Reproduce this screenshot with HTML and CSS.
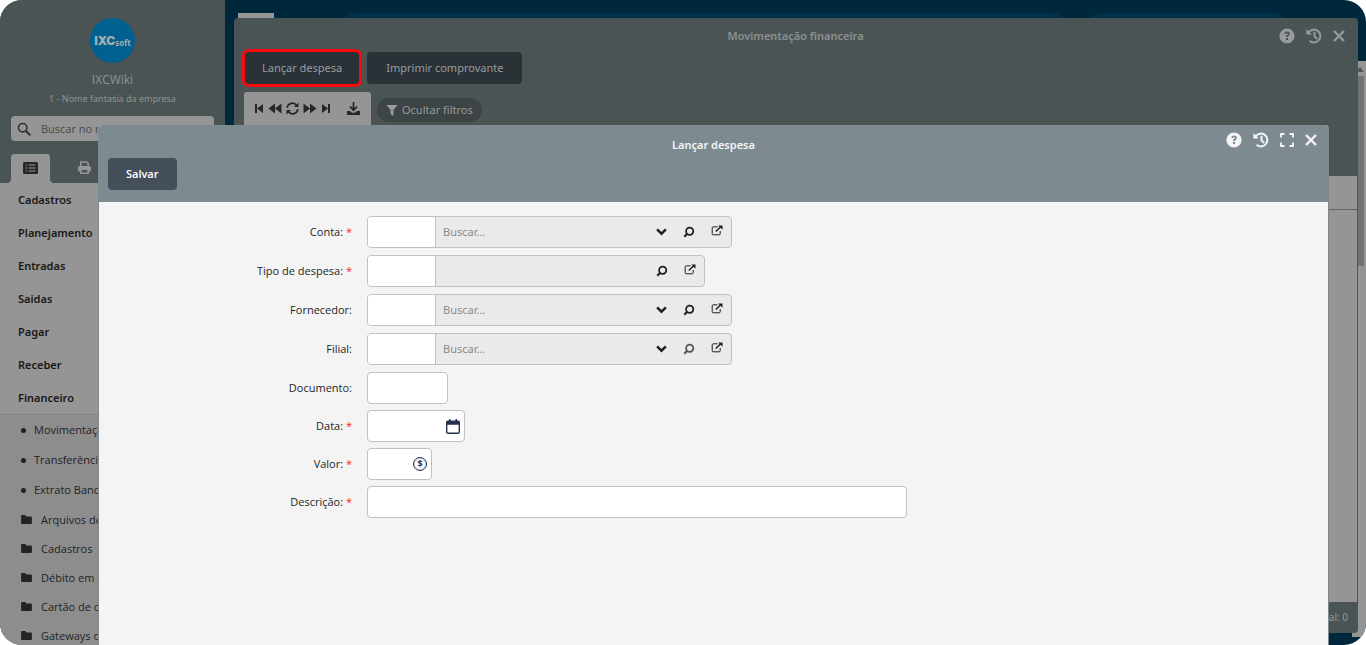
FILE: index.html
```html
<!DOCTYPE html>
<html lang="pt-BR">
<head>
<meta charset="utf-8">
<title>Lançar despesa</title>
<link rel="stylesheet" href="styles.css">
</head>
<body>
<svg class="sprite" aria-hidden="true">
  <symbol id="i-search" viewBox="0 0 16 16"><circle cx="6.5" cy="6.5" r="4.8" fill="none" stroke="currentColor" stroke-width="1.8"/><path d="M10 10l4.6 4.6" stroke="currentColor" stroke-width="2.2" stroke-linecap="round"/></symbol>
  <symbol id="i-folder" viewBox="0 0 12 10"><path d="M1 0h3.4l1.6 1.6H11a1 1 0 0 1 1 1V9a1 1 0 0 1-1 1H1a1 1 0 0 1-1-1V1a1 1 0 0 1 1-1z" fill="currentColor"/></symbol>
  <symbol id="i-help" viewBox="0 0 16 16"><path fill-rule="evenodd" fill="currentColor" d="M8 0.4a7.6 7.6 0 1 0 0 15.2A7.6 7.6 0 0 0 8 .4zM5.4 5.9C5.6 4.4 6.6 3.6 8.1 3.6c1.6 0 2.7.9 2.7 2.2 0 1-.5 1.6-1.2 2.1-.6.4-.7.6-.7 1.1H7.1c0-1.2.3-1.7 1-2.2.6-.4.8-.6.8-1 0-.4-.3-.7-.8-.7s-.8.3-.9.9zM7 10h2v2H7z"/></symbol>
  <symbol id="i-history" viewBox="0 0 16 16"><path d="M2.8 4.2A6.4 6.4 0 1 1 4.2 13.2M8.500 4.600v3.800l2.200 2" fill="none" stroke="currentColor" stroke-width="2" stroke-linecap="round"/><path d="M.3 1v5.500h5.500z" fill="currentColor"/></symbol>
  <symbol id="i-expand" viewBox="0 0 14 14"><path d="M1 4.500V1h3.500M9.500 1H13v3.500M13 9.500V13H9.500M4.500 13H1V9.500" fill="none" stroke="currentColor" stroke-width="1.900"/></symbol>
  <symbol id="i-close" viewBox="0 0 12 12"><path d="M1 1l10 10M11 1L1 11" stroke="currentColor" stroke-width="2.400"/></symbol>
  <symbol id="i-down" viewBox="0 0 10 8"><path d="M1 2l4 4 4-4" fill="none" stroke="currentColor" stroke-width="2.200"/></symbol>
  <symbol id="i-lookup" viewBox="0 0 12 12"><circle cx="6.700" cy="5.300" r="3.600" fill="none" stroke="currentColor" stroke-width="1.800"/><path d="M4.200 7.800L1.300 10.700" stroke="currentColor" stroke-width="2.200"/></symbol>
  <symbol id="i-open" viewBox="0 0 12 12"><path d="M6.500 1.800H2.200a1 1 0 0 0-1 1v6a1 1 0 0 0 1 1h6a1 1 0 0 0 1-1V6" fill="none" stroke="currentColor" stroke-width="1"/><path d="M4.800 6.500L10 1.500" stroke="currentColor" stroke-width="1.500"/><path d="M7.200.5H11.500v4.300z" fill="currentColor"/></symbol>
</svg>

<div class="app">
  <aside class="sidebar">
    <div class="profile">
      <div class="logo"><span class="logo-main">IXC</span><span class="logo-sub">soft</span></div>
      <div class="profile-name">IXCWiki</div>
      <div class="profile-company">1 - Nome fantasia da empresa</div>
      <label class="menu-search">
        <svg class="ic-14"><use href="#i-search"/></svg>
        <input type="text" placeholder="Buscar no menu" aria-label="Buscar no menu">
      </label>
      <div class="tabs">
        <button class="tab tab-active" aria-label="Menu">
          <svg width="15" height="12" viewBox="0 0 15 12"><rect width="15" height="12" rx="1.500" fill="#262626"/><path d="M2.500 3h1.500M2.500 6h1.500M2.500 9h1.500M5.500 3h7M5.500 6h7M5.500 9h7" stroke="#959595" stroke-width="1.200"/></svg>
        </button>
        <button class="tab" aria-label="Imprimir">
          <svg width="13" height="13" viewBox="0 0 13 13"><path d="M2.800 5V1h5.900l1.500 1.500V5" fill="none" stroke="currentColor" stroke-width="1.600"/><path fill-rule="evenodd" fill="currentColor" d="M1.800 5h9.400A1.800 1.800 0 0 1 13 6.800V10.500h-2V13H2v-2.500H0V6.800A1.800 1.800 0 0 1 1.800 5zM3.600 9v2.500h5.800V9z"/></svg>
        </button>
      </div>
    </div>
    <nav>
      <ul class="menu">
        <li><a href="#">Cadastros</a></li>
        <li><a href="#">Planejamento</a></li>
        <li><a href="#">Entradas</a></li>
        <li><a href="#">Saidas</a></li>
        <li><a href="#">Pagar</a></li>
        <li><a href="#">Receber</a></li>
        <li><a href="#">Financeiro</a></li>
      </ul>
      <ul class="submenu">
        <li><a class="leaf" href="#">Movimentação financeira</a></li>
        <li><a class="leaf" href="#">Transferências</a></li>
        <li><a class="leaf" href="#">Extrato Bancário</a></li>
        <li><a class="folder" href="#"><svg class="ic-folder"><use href="#i-folder"/></svg>Arquivos de</a></li>
        <li><a class="folder" href="#"><svg class="ic-folder"><use href="#i-folder"/></svg>Cadastros</a></li>
        <li><a class="folder" href="#"><svg class="ic-folder"><use href="#i-folder"/></svg>Débito em conta</a></li>
        <li><a class="folder" href="#"><svg class="ic-folder"><use href="#i-folder"/></svg>Cartão de crédito</a></li>
        <li><a class="folder" href="#"><svg class="ic-folder"><use href="#i-folder"/></svg>Gateways de</a></li>
      </ul>
    </nav>
  </aside>

  <main class="workspace">
    <div class="topbar"><div class="topbar-tab"></div><div class="topbar-pill"></div><div class="topbar-pill topbar-pill-end"></div></div>
    <div class="scroller">
      <svg width="8" height="5" viewBox="0 0 8 5"><path d="M0 5l4-5 4 5z" fill="#555"/></svg>
      <div class="scroller-thumb"></div>
    </div>
    <section class="window">
      <header class="window-head">
        <h2 class="title">Movimentação financeira</h2>
        <div class="window-tools">
          <button aria-label="Ajuda"><svg class="ic-16"><use href="#i-help"/></svg></button>
          <button aria-label="Histórico"><svg class="ic-16"><use href="#i-history"/></svg></button>
          <button aria-label="Fechar"><svg class="ic-12"><use href="#i-close"/></svg></button>
        </div>
        <div class="actions">
          <button class="btn btn-marked">Lançar despesa</button>
          <button class="btn">Imprimir comprovante</button>
        </div>
        <div class="filters">
          <div class="pager">
            <button aria-label="Primeira"><svg width="10" height="11" viewBox="0 0 10 11" fill="currentColor"><path d="M1 1h2v9H1zM9 1v9L3 5.500z"/></svg></button>
            <button aria-label="Anterior"><svg width="14" height="11" viewBox="0 0 14 11" fill="currentColor"><path d="M7 .5v10L.5 5.500zM13.500.5v10L7 5.500z"/></svg></button>
            <button aria-label="Atualizar"><svg width="13" height="13" viewBox="0 0 13 13"><path d="M1.200 5.800a5.200 5.200 0 0 1 9.500-2.300M11.800 7.200a5.200 5.200 0 0 1-9.500 2.300" fill="none" stroke="currentColor" stroke-width="1.700"/><path d="M12.500.5V5H8zM.5 12.500V8H5z" fill="currentColor"/></svg></button>
            <button aria-label="Próxima"><svg width="14" height="11" viewBox="0 0 14 11" fill="currentColor"><path d="M.5.5v10L7 5.500zM7 .5v10l6.500-5z"/></svg></button>
            <button aria-label="Última"><svg width="10" height="11" viewBox="0 0 10 11" fill="currentColor"><path d="M7 1h2v9H7zM1 1v9l6-4.500z"/></svg></button>
            <button class="download" aria-label="Baixar"><svg width="13" height="13" viewBox="0 0 13 13"><path d="M6.500 0v7M3 4.500l3.500 3.700L10 4.500" fill="none" stroke="currentColor" stroke-width="1.700"/><path d="M0 9h3l2 1.700h3L10 9h3v4H0z" fill="currentColor"/></svg></button>
          </div>
          <button class="filter-toggle"><svg width="12" height="11" viewBox="0 0 12 11"><path d="M.5 0h11L7.500 5v6l-3-2V5z" fill="currentColor"/></svg>Ocultar filtros</button>
        </div>
      </header>
      <div class="grid-head"></div>
      <div class="grid-body"></div>
      <footer class="window-foot">Total: 0</footer>
    </section>
  </main>

  <section class="dialog" role="dialog" aria-labelledby="dialog-title">
    <header class="dialog-head">
      <h1 class="title" id="dialog-title">Lançar despesa</h1>
      <div class="dialog-tools">
        <button aria-label="Ajuda"><svg class="ic-16"><use href="#i-help"/></svg></button>
        <button aria-label="Histórico"><svg class="ic-16"><use href="#i-history"/></svg></button>
        <button aria-label="Maximizar"><svg class="ic-14"><use href="#i-expand"/></svg></button>
        <button aria-label="Fechar"><svg class="ic-12"><use href="#i-close"/></svg></button>
      </div>
      <button class="btn btn-save">Salvar</button>
    </header>
    <form class="form">
      <div class="row row-lookup">
        <label for="conta">Conta: <span class="req">*</span></label>
        <div class="lookup">
          <input id="conta" type="text">
          <span class="pick"><select aria-label="Buscar conta"><option>Buscar...</option></select><svg class="ic-down"><use href="#i-down"/></svg></span>
          <button type="button" aria-label="Pesquisar"><svg class="ic-12"><use href="#i-lookup"/></svg></button>
          <button type="button" aria-label="Abrir"><svg class="ic-open"><use href="#i-open"/></svg></button>
        </div>
      </div>
      <div class="row row-lookup">
        <label for="tipo">Tipo de despesa: <span class="req">*</span></label>
        <div class="lookup lookup-short">
          <input id="tipo" type="text">
          <span class="pick"></span>
          <button type="button" aria-label="Pesquisar"><svg class="ic-12"><use href="#i-lookup"/></svg></button>
          <button type="button" aria-label="Abrir"><svg class="ic-open"><use href="#i-open"/></svg></button>
        </div>
      </div>
      <div class="row row-lookup">
        <label for="fornecedor">Fornecedor:</label>
        <div class="lookup">
          <input id="fornecedor" type="text">
          <span class="pick"><select aria-label="Buscar fornecedor"><option>Buscar...</option></select><svg class="ic-down"><use href="#i-down"/></svg></span>
          <button type="button" aria-label="Pesquisar"><svg class="ic-12"><use href="#i-lookup"/></svg></button>
          <button type="button" aria-label="Abrir"><svg class="ic-open"><use href="#i-open"/></svg></button>
        </div>
      </div>
      <div class="row row-lookup">
        <label for="filial">Filial:</label>
        <div class="lookup">
          <input id="filial" type="text">
          <span class="pick"><select aria-label="Buscar filial"><option>Buscar...</option></select><svg class="ic-down"><use href="#i-down"/></svg></span>
          <button type="button" class="muted" aria-label="Pesquisar"><svg class="ic-12"><use href="#i-lookup"/></svg></button>
          <button type="button" aria-label="Abrir"><svg class="ic-open"><use href="#i-open"/></svg></button>
        </div>
      </div>
      <div class="row">
        <label for="documento">Documento:</label>
        <div class="field field-doc"><input id="documento" type="text"></div>
      </div>
      <div class="row">
        <label for="data">Data: <span class="req">*</span></label>
        <div class="field field-date"><input id="data" type="text">
          <svg width="14" height="15" viewBox="0 0 14 15"><path d="M3 0h1.500v2H3zM9.500 0H11v2H9.500z" fill="#23304f"/><rect x=".7" y="2.200" width="12.600" height="12" rx="1.200" fill="#fff" stroke="#23304f" stroke-width="1.400"/><path d="M.7 2.200h12.600v3.500H.7z" fill="#23304f"/></svg>
        </div>
      </div>
      <div class="row">
        <label for="valor">Valor: <span class="req">*</span></label>
        <div class="field field-value"><input id="valor" type="text"><span class="coin">$</span></div>
      </div>
      <div class="row">
        <label for="descricao">Descrição: <span class="req">*</span></label>
        <div class="field field-desc"><input id="descricao" type="text"></div>
      </div>
    </form>
  </section>
</div>
</body>
</html>
```

FILE: styles.css
```css
* { box-sizing: border-box; }

body {
  margin: 0;
  background: #fff;
  font-family: "Noto Sans", sans-serif;
  font-size: 11px;
  line-height: 16px;
}

button, input, select { font: inherit; color: inherit; }
button { padding: 0; border: 0; background: none; display: flex; align-items: center; justify-content: center; cursor: pointer; }
ul { margin: 0; padding: 0; list-style: none; }
a { color: inherit; text-decoration: none; }
svg { display: block; flex: none; }

.sprite { position: absolute; width: 0; height: 0; }
.ic-16 { width: 16px; height: 16px; }
.ic-14 { width: 14px; height: 14px; }
.ic-12 { width: 12px; height: 12px; }
.ic-open { width: 12px; height: 12px; margin-bottom: 3px; }
.ic-folder { width: 11px; height: 9px; }

.app {
  position: relative;
  display: flex;
  height: 100vh;
  overflow: hidden;
  border-radius: 22px;
  background: #00283d;
}

/* Sidebar */
.sidebar { width: 225px; flex: none; overflow: hidden; background: #959595; color: #232323; white-space: nowrap; }
.profile { display: flex; flex-direction: column; align-items: center; padding: 18px 11px 0; background: #4b5455; color: #8f9393; }
.logo { display: flex; align-items: center; justify-content: center; width: 45px; height: 45px; border-radius: 50%; background: #00608f; color: #a3adb2; }
.logo-main { font: 900 12px/16px Inter, sans-serif; }
.logo-sub { font: 700 8px/10px "Open Sans", sans-serif; padding-top: 4px; }
.profile-name { margin-top: 9px; font-family: "Open Sans", sans-serif; font-size: 12px; }
.profile-company { margin-top: 4px; font-size: 9px; line-height: 14px; }
.menu-search { display: flex; align-items: center; gap: 10px; align-self: stretch; height: 25px; margin-top: 10px; padding: 0 6px; border-radius: 4px; background: #959595; color: #303030; font-family: "Open Sans", sans-serif; }
.menu-search input { flex: 1; min-width: 0; padding: 0; border: 0; background: none; outline: none; }
.menu-search input::placeholder { color: #484848; opacity: 1; }
.tabs { display: flex; align-self: stretch; gap: 15px; margin-top: 13px; }
.tab { position: relative; width: 39px; height: 29px; padding-bottom: 2px; color: #959595; }
.tab-active { border-radius: 3px 3px 0 0; background: #959595; }
.tab-active::before, .tab-active::after { content: ""; position: absolute; bottom: 0; width: 4px; height: 4px; }
.tab-active::before { right: 100%; background: radial-gradient(circle at 0 0, #4b5455 4px, #959595 4px); }
.tab-active::after { left: 100%; background: radial-gradient(circle at 100% 0, #4b5455 4px, #959595 4px); }

.menu a { display: block; padding: 0 18px; line-height: 33px; font-weight: 600; color: #181818; }
.submenu { border-top: 1px solid #838383; background: #8d8d8d; font-family: "Open Sans", sans-serif; }
.leaf, .folder { display: flex; align-items: center; }
.leaf { gap: 8px; height: 30px; padding-left: 21px; }
.leaf::before { content: ""; width: 5px; height: 5px; border-radius: 50%; background: #202020; }
.folder { gap: 9px; height: 29px; padding-left: 21px; }

/* Workspace behind the dialog */
.workspace { position: relative; flex: 1; min-width: 0; padding: 18px 8px 12px 9px; }
.topbar { position: absolute; top: 13px; left: 13px; right: 78px; display: flex; height: 30px; }
.topbar-tab { width: 36px; margin-right: 66px; background: #959595; }
.topbar-pill { flex: 1; border-radius: 15px; background: #003148; }
.topbar-pill-end { flex: none; width: 202px; margin-left: 18px; }
.scroller { position: absolute; top: 61px; right: 0; bottom: 8px; width: 14px; padding: 6px 2px 0; background: #959595; }
.scroller-thumb { height: 190px; margin-top: 4px; background: #727272; }
.scroller svg { margin-left: 2px; }
.window { position: relative; display: flex; flex-direction: column; height: 100%; border: solid #4b5455; border-width: 0 1px 0 0; border-radius: 4px; overflow: hidden; background: #4b5455; }
.window-head { display: flex; flex-direction: column; height: 158px; flex: none; padding: 10px; }
.title { margin: 0; font-size: 11px; line-height: 16px; font-weight: 600; text-align: center; }
.window-head .title { color: #8d9191; }
.window-tools { position: absolute; top: 10px; right: 12px; display: flex; align-items: center; gap: 11px; color: #979a9a; }
.actions { display: flex; gap: 8px; margin-top: 8px; }
.btn { height: 32px; padding: 0 19px; border-radius: 4px; background: #2a3137; color: #9a9c9e; font-size: 11px; }
.btn-marked { margin-left: 1px; padding: 0 17px; box-shadow: 0 0 0 3px #fa0a0a; }
.filters { display: flex; align-items: flex-start; gap: 6px; margin-top: 8px; }
.pager { display: flex; align-items: center; gap: 4px; height: 40px; padding: 0 11px 8px 10px; border-radius: 3px 3px 0 0; background: #959595; color: #262626; }
.download { margin-left: 12px; }
.filter-toggle { gap: 4px; height: 24px; margin-top: 6px; padding: 0 9px; border-radius: 12px; background: #3d4445; color: #969999; }
.grid-head { height: 34px; flex: none; border-bottom: 1px solid #646464; background: #959595; }
.grid-body { flex: 1; background: #959595; }
.window-foot { height: 31px; flex: none; padding: 0 9px; line-height: 31px; text-align: right; font-size: 10px; color: #929696; }

/* Dialog */
.dialog { position: absolute; top: 125px; left: 98px; right: 37px; bottom: 0; display: flex; flex-direction: column; border: solid #7d8b90; border-width: 0 1px; border-radius: 4px 4px 0 0; overflow: hidden; background: #f4f4f4; color: #1f1f1f; }
.dialog-head { padding: 12px 9px; background: #7d8b90; color: #f4f4f4; }
.dialog-tools { position: absolute; top: 7px; right: 11px; display: flex; align-items: center; gap: 11px; }
.dialog .btn-save { height: 32px; margin-top: 5px; background: #454f5a; color: #fff; font-family: "Open Sans", sans-serif; font-weight: 600; padding: 0 18px; }
.form { flex: 1; padding: 14px 0; }
.row { display: grid; grid-template-columns: 253px 1fr; column-gap: 15px; align-items: center; height: 38px; padding-bottom: 6px; }
.row-lookup { height: 39px; padding-bottom: 7px; }
.row label { text-align: right; font-family: "Open Sans", sans-serif; }
.req { color: #f22; }
.lookup, .field { display: flex; align-items: center; height: 32px; border: 1px solid #bcc2c7; border-radius: 4px; overflow: hidden; background: #fff; }
.lookup { width: 365px; background: #eaeaea; }
.lookup-short { width: 338px; }
.lookup input { width: 68px; height: 100%; border: 0; border-right: 1px solid #bcc2c7; background: #fff; outline: none; }
.lookup button { width: 28px; height: 100%; }
.lookup .muted { color: #555; }
.pick { position: relative; flex: 1; height: 100%; }
.pick select { width: 100%; height: 100%; padding: 0 7px; border: 0; background: none; appearance: none; color: #8b8b8b; outline: none; }
.ic-down { position: absolute; top: 10px; right: 8px; width: 11px; height: 9px; pointer-events: none; }
.field input { flex: 1; min-width: 0; height: 100%; border: 0; background: none; outline: none; }
.field-doc { width: 81px; }
.field-date { width: 98px; padding-right: 4px; }
.field-value { width: 65px; padding-right: 4px; }
.field-desc { width: 540px; }
.coin { display: flex; align-items: center; justify-content: center; width: 14px; height: 14px; border: 1px solid #23304f; outline: 1px solid #7c849866; outline-offset: -2px; border-radius: 50%; font-size: 9px; line-height: 12px; font-weight: 700; color: #23304f; }
```
